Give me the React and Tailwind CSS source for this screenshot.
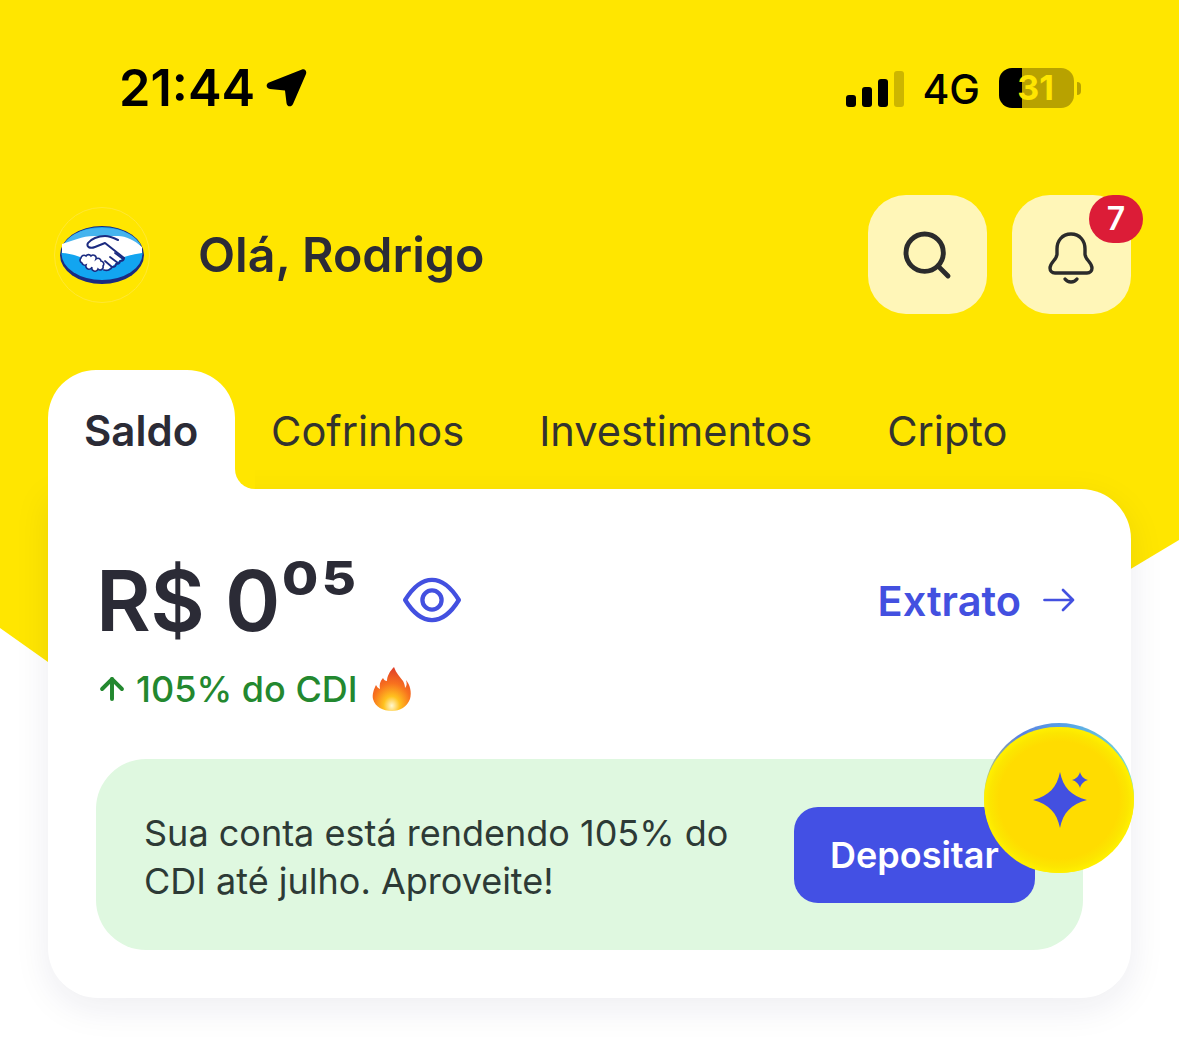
import { Search, ArrowUp } from 'lucide-react'

const tabs = ['Cofrinhos', 'Investimentos', 'Cripto']

function Logo() {
  return (
    <div className="w-[96px] h-[96px] rounded-full border border-[#ffe833] flex items-center justify-center">
      <svg width="84" height="58" viewBox="0 0 84 58">
        <ellipse cx="42" cy="29" rx="42" ry="29" fill="#1b2a80" />
        <ellipse cx="42" cy="27.500" rx="40.500" ry="26.500" fill="#12a5f0" />
        <path d="M3 19C12 6 26 2 42 2s30 4 39 17C72 15 66 11 58 11H34C24 11 12 15 3 19Z" fill="#45b4ee" />
        <path d="M2 18C12 15 22 10 34 10H58C66 10 74 14 82 21V27C76 28 70 29 64 31L46 45L20 31C14 29 8 27 2 27Z" fill="#fff" />
        <path d="M64 32L45 17L35 21C30 23 26 21 28 17C31 13 38 10 45 10C50 10 54 12 58 14" fill="#fff" stroke="#1b2a80" strokeWidth="2" strokeLinecap="round" strokeLinejoin="round" />
        <path d="M55 27L63 33M50 31L58 37M45 35L52 41M64 32C64 34 62 35 60 35C60 37 58 38 56 38C56 40 54 41 52 41C51 44 47 45 44 44" fill="none" stroke="#1b2a80" strokeWidth="1.800" strokeLinecap="round" strokeLinejoin="round" />
        <path d="M21 32a3 3 0 0 1 5-2a3 3 0 0 1 5 0a3 3 0 0 1 5 3a3 3 0 0 1 5 2a3 3 0 0 1 2 5a3 3 0 0 1-5 3a3 3 0 0 1-6-2a3 3 0 0 1-6-2a3 3 0 0 1-4-2a3 3 0 0 1-1-5Z" fill="#fff" stroke="#1b2a80" strokeWidth="1.600" />
      </svg>
    </div>
  )
}

function BellIcon() {
  return (
    <svg width="48" height="54" viewBox="0 0 48 54" fill="none" stroke="#2b2b2b" strokeWidth="3.400" strokeLinecap="round" strokeLinejoin="round">
      <path d="M24 2C15 2 10 9 10 17V22C10 28 3 30 3 36C3 39 5 41 8 41H40C43 41 45 39 45 36C45 30 38 28 38 22V17C38 9 33 2 24 2Z" />
      <path d="M18 47C21 51 27 51 30 47" />
    </svg>
  )
}

function Flame() {
  return (
    <svg width="42" height="44" viewBox="0 0 42 44">
      <defs>
        <radialGradient id="flameFill" cx="50%" cy="88%" r="85%">
          <stop offset="0%" stopColor="#fff8d0" />
          <stop offset="25%" stopColor="#ffc21f" />
          <stop offset="60%" stopColor="#f8711e" />
          <stop offset="100%" stopColor="#e0402a" />
        </radialGradient>
      </defs>
      <path d="M23 0C25 6 29 10 32 14C33 16 34 18 34 21C36 19 36 16 35 13C39 18 41 25 39 32C36 40 29 44 21 44C12 44 4 40 2 32C1 27 3 22 5 18C6 20 7 21 9 22C8 18 9 14 12 11C13 13 14 14 16 14C16 9 19 4 23 0Z" fill="url(#flameFill)" />
    </svg>
  )
}

function Sparkle() {
  return (
    <svg width="56" height="56" viewBox="0 0 56 56" fill="#4350e0" className="ml-[4px]">
      <path d="M27 0C30 15 38 24 54 28C38 32 30 41 27 56C24 41 16 32 0 28C16 24 24 15 27 0Z" />
      <path d="M47 0C48 4 51 7 55 8C51 9 48 12 47 16C46 12 43 9 39 8C43 7 46 4 47 0Z" />
    </svg>
  )
}

export default function App() {
  return (
    <div className="relative w-[1179px] h-[1046px] overflow-hidden bg-white font-['Inter',sans-serif] text-[#2b2b36]">
      {/* yellow backdrop */}
      <div className="absolute inset-0 bg-[#ffe600] [clip-path:polygon(0_0,100%_0,100%_540px,473px_963px,0_628px)]" />

      <div className="relative flex flex-col">
        {/* status bar */}
        <div className="h-[195px] pl-[119px] pr-[98px] pt-[60px] flex items-start justify-between text-black">
          <div className="h-[56px] flex items-center gap-[11px]">
            <span className="text-[50.500px] font-semibold leading-none">21:44</span>
            <svg width="41" height="38" viewBox="0 0 41 38" fill="#000">
              <path d="M36 0.5C39 -.5 41 2 40 5L27 35C25.500 38.500 21 38 20.500 34L19 21.500L4 20C0 19.500 -.5 15 3 13.500Z" />
            </svg>
          </div>
          <div className="h-[56px] flex items-center">
            <div className="flex items-end gap-[6px] h-[37px]">
              <div className="w-[10px] h-[12px] rounded-[3px] bg-black" />
              <div className="w-[10px] h-[20px] rounded-[3px] bg-black" />
              <div className="w-[10px] h-[28px] rounded-[3px] bg-black" />
              <div className="w-[10px] h-[36px] rounded-[3px] bg-[#cdb600]" />
            </div>
            <span className="ml-[18px] pt-[3px] text-[41px] font-medium leading-none">4G</span>
            <div className="ml-[19px] w-[75px] h-[40px] pr-[2px] rounded-[13px] bg-[linear-gradient(90deg,#000_31%,#b8a200_31%)] flex items-center justify-center text-[#ffe600] text-[34px] font-bold leading-none">
              31
            </div>
            <div className="ml-[3px] w-[4px] h-[13px] rounded-r-full bg-[#b8a200]" />
          </div>
        </div>

        {/* greeting */}
        <div className="h-[119px] pl-[54px] pr-[48px] flex items-center">
          <Logo />
          <span className="ml-[48px] pt-[2px] text-[48.300px] font-semibold leading-none">Olá, Rodrigo</span>
          <div className="ml-auto flex gap-[25px]">
            <button className="w-[119px] h-[119px] rounded-[38px] bg-[#fff6b8] flex items-center justify-center">
              <Search size={56} strokeWidth={2.1} className="text-[#2b2b2b] -ml-[2px]" />
            </button>
            <button className="relative w-[119px] h-[119px] rounded-[38px] bg-[#fff6b8] flex items-center justify-center">
              <span className="pt-[8px] -ml-[1px]"><BellIcon /></span>
              <span className="absolute left-[77px] top-0 w-[54px] h-[48px] rounded-full bg-[#dc1c37] text-white text-[32px] font-semibold flex items-center justify-center">7</span>
            </button>
          </div>
        </div>

        {/* tabs */}
        <div className="relative z-10 mt-[56px] mx-[48px] h-[119px] flex">
          <div className="relative w-[187px] bg-white rounded-t-[48px] pt-[37px] pl-[36px] text-[42px] font-semibold leading-[48px]">
            Saldo
            <div className="absolute left-full bottom-0 w-[20px] h-[20px] bg-white">
              <div className="w-full h-full bg-[#ffe600] rounded-bl-[20px]" />
            </div>
          </div>
          <div className="ml-[36px] flex gap-[75px] pt-[37px] text-[41.600px] leading-[48px] text-[#33332f]">
            {tabs.map((t) => (
              <span key={t}>{t}</span>
            ))}
          </div>
        </div>

        {/* balance card */}
        <div className="relative mx-[48px] h-[509px] bg-white rounded-tr-[50px] rounded-b-[50px] shadow-[0_10px_36px_rgba(30,30,80,0.08)] px-[48px] pt-[62px]">
          <div className="flex items-start justify-between">
            <div className="flex items-start">
              <span className="text-[84px] font-semibold leading-[100px] tracking-[-0.5px]">R$ 0</span>
              <span className="ml-[2px] text-[46px] font-extrabold leading-[54px] tracking-[3px] scale-x-[1.14] origin-left">05</span>
              <svg className="ml-[53px] mt-[26px]" width="58" height="46" viewBox="0 0 60 48" fill="none" stroke="#4350e0" strokeWidth="4.500">
                <path d="M2 24C10 11 19 3 30 3s20 8 28 21C50 37 41 45 30 45S10 37 2 24Z" strokeLinejoin="round" />
                <circle cx="30" cy="24" r="10" />
              </svg>
            </div>
            <div className="flex items-center mt-[30px] mr-[8px] text-[#4350e0]">
              <span className="text-[41.500px] font-semibold leading-none">Extrato</span>
              <svg className="ml-[22px] -mt-[4px]" width="32" height="24" viewBox="0 0 32 24" fill="none" stroke="currentColor" strokeWidth="2.700" strokeLinecap="round" strokeLinejoin="round">
                <path d="M1.500 12H30M20 2L30 12L20 22" />
              </svg>
            </div>
          </div>

          <div className="mt-[16px] h-[44px] flex items-center text-[#23882f]">
            <ArrowUp size={34} strokeWidth={2.8} className="-ml-[1px]" />
            <span className="ml-[7px] text-[36px] font-medium leading-none">105% do CDI</span>
            <span className="ml-[13px]"><Flame /></span>
          </div>

          {/* promo banner */}
          <div className="mt-[48px] h-[191px] rounded-[50px] bg-[#dff8e0] pl-[48px] pr-[48px] flex items-center justify-between">
            <p className="pt-[4px] text-[36px] leading-[48px] text-[#2d3a36]">
              Sua conta está rendendo 105% do<br />CDI até julho. Aproveite!
            </p>
            <button className="w-[241px] h-[96px] shrink-0 rounded-[24px] bg-[#4350e4] text-white text-[36px] font-semibold pl-[36px] text-left">
              Depositar
            </button>
          </div>

          {/* assistant button */}
          <div className="absolute left-[936px] top-[234px] w-[150px] h-[150px] rounded-full bg-[conic-gradient(from_270deg,#e0e850_0%,#5a80e0_16%,#58a8e8_28%,#80e0c8_46%,#ffe600_55%,#ffe600_95%,#e0e850_100%)]">
            <div className="mt-[4px] w-[150px] h-[146px] rounded-full bg-[radial-gradient(closest-side,#ffdc00_0%,#ffdc00_80%,#fce600_92%,#fff000_100%)] flex items-center justify-center">
              <Sparkle />
            </div>
          </div>
        </div>
      </div>
    </div>
  )
}
